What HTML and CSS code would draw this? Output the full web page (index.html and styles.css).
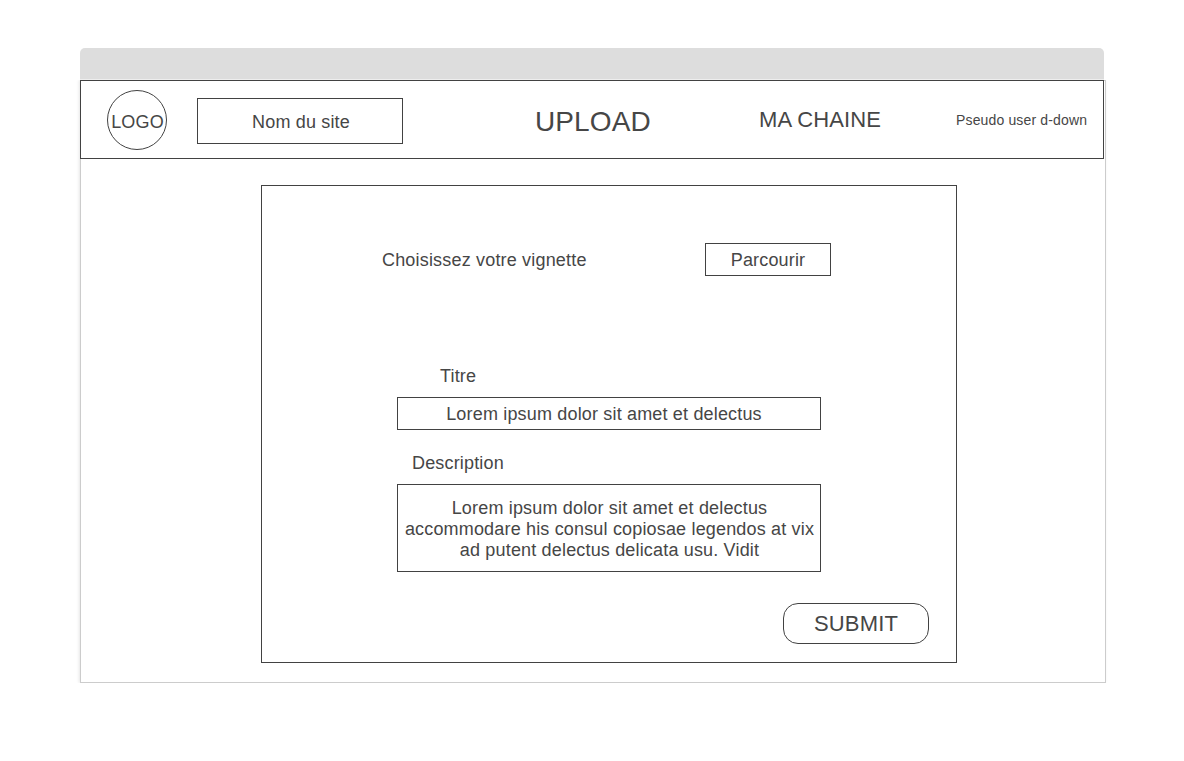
FILE: index.html
```html
<!DOCTYPE html>
<html lang="fr">
<head>
<meta charset="utf-8">
<title>Upload</title>
<link rel="stylesheet" href="styles.css">
</head>
<body>
<div class="titlebar"></div>
<div class="window">
  <header class="header">
    <div class="logo"><span>LOGO</span></div>
    <div class="site-name">Nom du site</div>
    <a class="nav-upload">UPLOAD</a>
    <a class="nav-channel">MA CHAINE</a>
    <a class="nav-user">Pseudo user d-down</a>
  </header>
  <main class="panel">
    <div class="thumb-row">
      <span class="thumb-label">Choisissez votre vignette</span>
      <div class="box browse">Parcourir</div>
    </div>
    <div class="label title-label">Titre</div>
    <div class="box title-field">Lorem ipsum dolor sit amet et delectus</div>
    <div class="label desc-label">Description</div>
    <div class="box desc-field">Lorem ipsum dolor sit amet et delectus<br>accommodare his consul copiosae legendos at vix<br>ad putent delectus delicata usu. Vidit</div>
    <div class="submit">SUBMIT</div>
  </main>
</div>
</body>
</html>
```
FILE: styles.css
```css
* { box-sizing: border-box; }
body {
  margin: 0;
  padding: 48px 0 0 80px;
  background: #fff;
  color: #464646;
  font: 18px/21px "Liberation Sans", Arial, sans-serif;
  letter-spacing: 0.17px;
  white-space: nowrap;
}
.titlebar {
  width: 1024px;
  height: 32px;
  background: #ddd;
  border-bottom: 1px solid #eee;
  border-radius: 5px 5px 0 0;
}
.window {
  width: 1026px;
  height: 603px;
  border: 1px solid #ccc;
  box-shadow: -1px 0 3px rgba(0, 0, 0, 0.1);
  clip-path: inset(0 -6px -6px -6px);
}
.header {
  display: flex;
  width: 1024px;
  height: 79px;
  margin: -1px 0 0 -1px;
  padding-left: 26px;
  border: 1px solid #424242;
}
.logo {
  display: flex;
  align-items: center;
  justify-content: center;
  width: 60px;
  height: 60px;
  margin-top: 9px;
  padding: 4px 0 0 1px;
  border: 1px solid #424242;
  border-radius: 50%;
}
.site-name {
  width: 206px;
  height: 46px;
  margin: 17px 0 0 30px;
  padding: 1px 0 0 2px;
  border: 1px solid #424242;
  line-height: 45px;
  text-align: center;
}
.nav-upload {
  width: 116px;
  margin-left: 132px;
  font-size: 28px;
  line-height: 81px;
  letter-spacing: 0.1px;
}
.nav-channel {
  width: 123px;
  margin-left: 108px;
  font-size: 22px;
  line-height: 77px;
  letter-spacing: 0.12px;
}
.nav-user {
  margin-left: 74px;
  font-size: 14px;
  line-height: 78px;
  letter-spacing: 0.15px;
}
.panel {
  display: flex;
  flex-direction: column;
  width: 696px;
  height: 478px;
  margin: 26px 0 0 180px;
  padding: 57px 27px 0 120px;
  border: 1px solid #424242;
}
.thumb-row {
  display: flex;
  justify-content: space-between;
  width: 449px;
  height: 33px;
}
.thumb-label {
  line-height: 35px;
  letter-spacing: 0.18px;
}
.box {
  border: 1px solid #424242;
  text-align: center;
}
.browse {
  width: 126px;
  height: 33px;
  line-height: 32px;
}
.title-label { margin: 90px 0 0 58px; }
.title-field {
  width: 424px;
  height: 33px;
  margin: 10px 0 0 15px;
  padding-right: 10px;
  line-height: 32px;
}
.desc-label { margin: 23px 0 0 30px; }
.desc-field {
  width: 424px;
  height: 88px;
  margin: 10px 0 0 15px;
  padding: 13px 0 0 1px;
}
.submit {
  align-self: flex-end;
  width: 146px;
  height: 41px;
  margin-top: 31px;
  border: 1px solid #424242;
  border-radius: 15px;
  font-size: 22px;
  line-height: 40px;
  text-align: center;
}
```
